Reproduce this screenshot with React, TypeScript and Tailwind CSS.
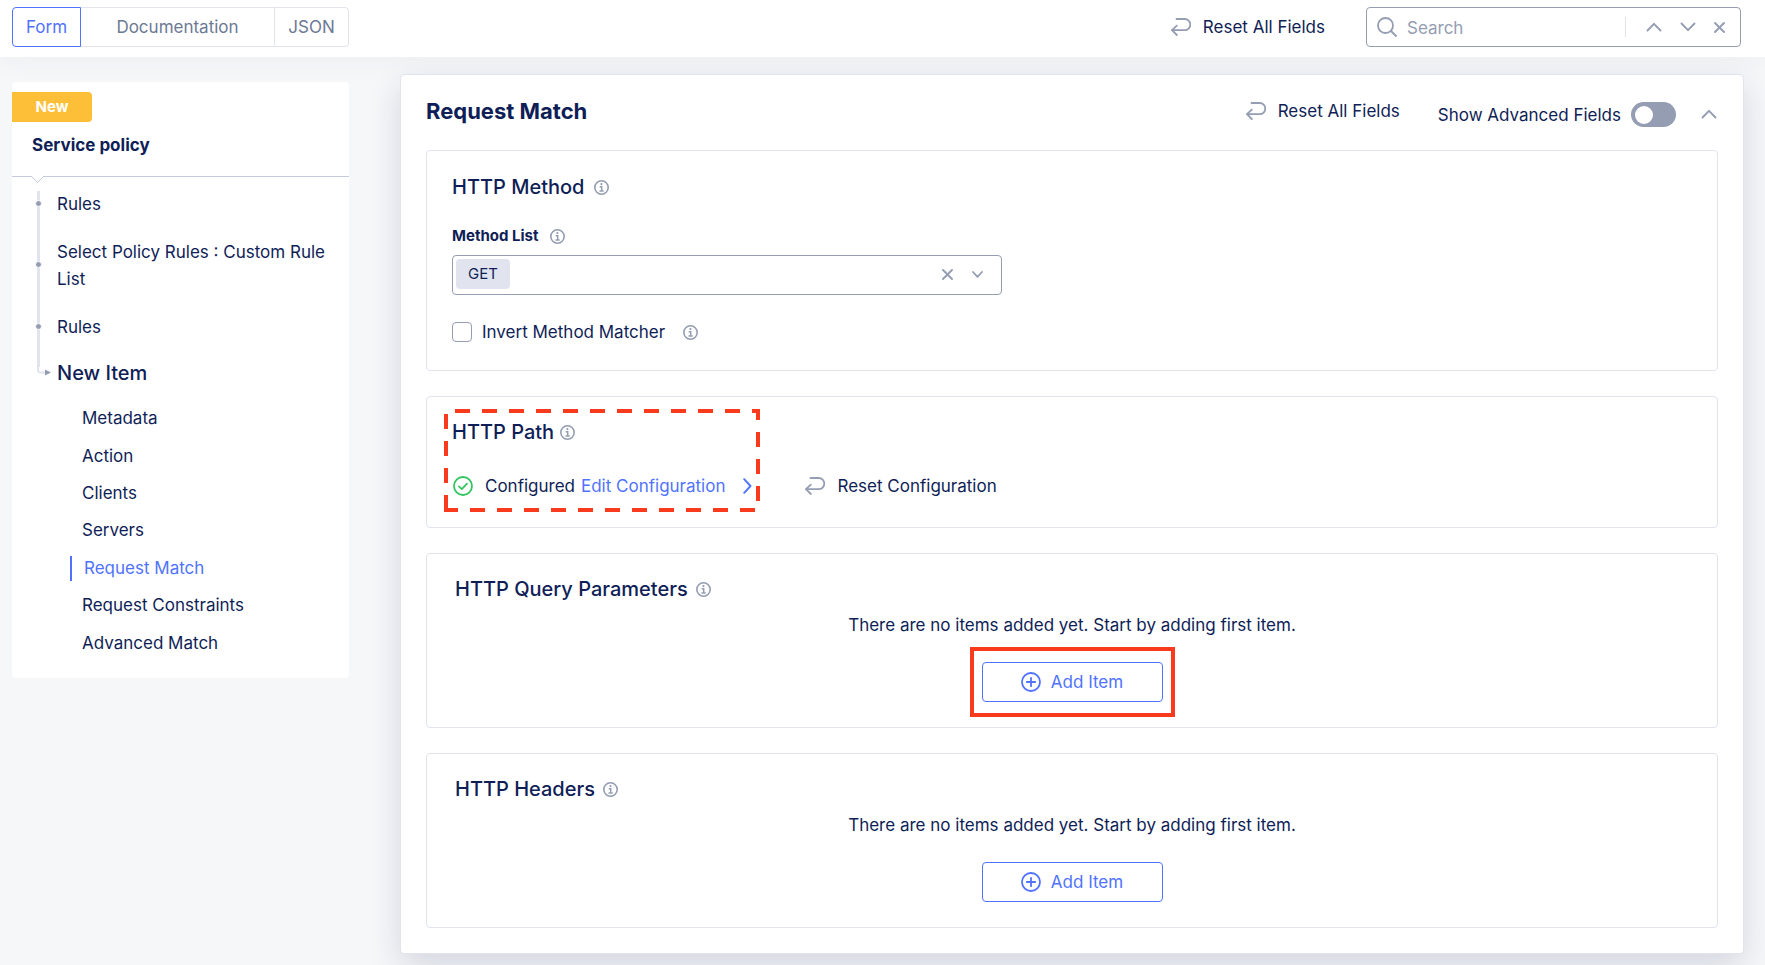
import React, { useState } from "react";

function ResetIcon() {
  return (
    <svg viewBox="0 0 20 18" className="h-[18px] w-5 shrink-0" fill="none" stroke="#949db2" strokeWidth="1.8" strokeLinecap="round" strokeLinejoin="round" aria-hidden="true">
      <path d="M5.500 1h8.200a5.300 5.300 0 0 1 0 11.200H1.200" />
      <path d="M5.800 7.600 1 12.200l4.800 4.800" />
    </svg>
  );
}

function InfoIcon() {
  return (
    <svg viewBox="0 0 15 15" className="size-[15px] shrink-0" fill="none" stroke="#949db2" aria-hidden="true">
      <circle cx="7.500" cy="7.500" r="6.700" strokeWidth="1.600" />
      <circle cx="7.400" cy="4.100" r="1.100" fill="#949db2" stroke="none" />
      <path d="M5.700 6.800h2v4M5.500 11h4.200" strokeWidth="1.500" />
    </svg>
  );
}

function Chevron({ dir, className }: { dir: "up" | "down" | "right"; className: string }) {
  const d = dir === "up" ? "M1.500 8.500 8 1.800l6.500 6.700" : dir === "down" ? "M1.500 1.500 8 8.200l6.500-6.700" : "M1.200 1.200l6.300 6.800-6.300 6.800";
  return (
    <svg viewBox={dir === "right" ? "0 0 9 16" : "0 0 16 10"} className={className} fill="none" stroke="currentColor" strokeWidth="1.900" strokeLinecap="round" strokeLinejoin="round" aria-hidden="true">
      <path d={d} />
    </svg>
  );
}

function Cross() {
  return (
    <svg viewBox="0 0 11 11" className="size-[11px]" fill="none" stroke="currentColor" strokeWidth="1.900" strokeLinecap="round" aria-hidden="true">
      <path d="M1 1l9 9M10 1l-9 9" />
    </svg>
  );
}

function ResetButton({ children }: { children: React.ReactNode }) {
  return (
    <button type="button" className="flex items-center gap-3">
      <ResetIcon />
      <span>{children}</span>
    </button>
  );
}

function AddItem() {
  return (
    <button type="button" className="flex h-10 w-[181px] items-center justify-center gap-[10px] rounded border border-[#4f73ff] bg-white text-[#4f73ff]">
      <svg viewBox="0 0 20 20" className="size-5" fill="none" stroke="currentColor" strokeWidth="1.800" strokeLinecap="round" aria-hidden="true">
        <circle cx="10" cy="10" r="9" />
        <path d="M10 5.800v8.400M5.800 10h8.400" />
      </svg>
      Add Item
    </button>
  );
}

function EmptyList({ title, highlighted }: { title: string; highlighted?: boolean }) {
  return (
    <section className="rounded border border-[#e1e4ef] px-7 pt-[21px] pb-[25px]">
      <h3 className="flex h-7 items-center gap-2 text-[20px] leading-7 font-medium">
        {title} <InfoIcon />
      </h3>
      <div className="flex flex-col items-center">
        <p className="mt-2 mb-[23px] leading-7">There are no items added yet. Start by adding first item.</p>
        <div className="relative">
          <AddItem />
          {highlighted && <div className="pointer-events-none absolute -inset-x-3 -inset-y-[15px] border-4 border-[#f93a1d]" />}
        </div>
      </div>
    </section>
  );
}

const sections = ["Metadata", "Action", "Clients", "Servers", "Request Match", "Request Constraints", "Advanced Match"];

function Step({ children }: { children: React.ReactNode }) {
  return (
    <li className="relative">
      <span className="absolute top-1/2 -left-[22px] size-[7px] -translate-y-[5px] rounded-full border border-white bg-[#949db2]" />
      <a href="#rules">{children}</a>
    </li>
  );
}

function Sidebar() {
  return (
    <aside className="w-[337px] shrink-0 rounded bg-white pb-4">
      <div className="border-b border-[#c5cbdd] pt-[10px] pb-[17px]">
        <span className="flex h-[30px] w-20 items-center justify-center rounded-r bg-[#fdbf38] text-[15px] font-bold text-white">New</span>
        <h2 className="mt-[9px] pl-5 text-[17px] leading-7 font-bold">Service policy</h2>
      </div>
      <svg viewBox="0 0 13 8" className="-mt-px ml-[19px] block h-2 w-[13px]" aria-hidden="true">
        <path d="M.5 0h12L6.500 6.500z" fill="#fff" />
        <path d="M.5.5l6 6 6-6" fill="none" stroke="#c5cbdd" />
      </svg>
      <nav aria-label="Form sections">
        <div className="relative pl-[45px]">
          <svg viewBox="0 0 16 186" className="absolute top-[7px] left-[24px] h-[186px] w-4" fill="none" aria-hidden="true">
            <path d="M2.500 0v176" stroke="#e1e4ef" strokeWidth="3" />
            <path d="M2 174v5q0 2.500 2.500 2.500H9" stroke="#e1e4ef" strokeWidth="2" />
            <path d="M9 178.500v6l6-3z" fill="#949db2" />
          </svg>
          <ul className="flex flex-col gap-[21px] pt-[7px] leading-[27px]">
            <Step>Rules</Step>
            <Step>Select Policy Rules : Custom Rule List</Step>
            <Step>Rules</Step>
          </ul>
          <a href="#new-item" className="mt-[18px] block text-[20px] leading-7 font-medium">New Item</a>
        </div>
        <ul className="mt-[13px] grid h-[262px] auto-rows-fr items-center pl-[58px]">
          {sections.map((s) =>
            s === "Request Match" ? (
              <li key={s}><a href="#request-match" aria-current="true" className="block border-l-2 border-[#4f73ff] pl-3 leading-[25px] text-[#4f73ff]">{s}</a></li>
            ) : (
              <li key={s} className="pl-3"><a href="#section" className="block leading-[25px]">{s}</a></li>
            )
          )}
        </ul>
      </nav>
    </aside>
  );
}

function Toolbar() {
  return (
    <header className="relative z-10 flex h-[57px] items-start justify-between bg-white pt-[7px] pr-6 pl-3 shadow-[0_0_30px_rgba(40,45,70,0.06)]">
      <div className="flex h-10 text-[#6b7994]">
        <button type="button" className="w-[69px] rounded-l border border-[#4f73ff] text-[#4f73ff]">Form</button>
        <button type="button" className="w-[193px] border-y border-[#e1e4ef]">Documentation</button>
        <button type="button" className="w-[75px] rounded-r border border-[#e1e4ef]">JSON</button>
      </div>
      <div className="flex items-start gap-[41px]">
        <div className="flex h-10 items-center"><ResetButton>Reset All Fields</ResetButton></div>
        <div className="flex h-10 w-[375px] items-center rounded border border-[#949db2] pl-[10px] text-[#949db2]">
          <svg viewBox="0 0 20 20" className="size-5 shrink-0" fill="none" stroke="currentColor" strokeWidth="1.800" strokeLinecap="round" aria-hidden="true">
            <circle cx="8.500" cy="8.500" r="7.500" />
            <path d="M14 14l5 5" />
          </svg>
          <input aria-label="Search" placeholder="Search" className="ml-[10px] h-full min-w-0 flex-1 pt-[2px] outline-none placeholder:text-[#949db2]" />
          <div className="flex h-5 items-center gap-[18px] border-l border-[#e1e4ef] pr-[15px] pl-5">
            <button type="button" aria-label="Previous result"><Chevron dir="up" className="h-[10px] w-4" /></button>
            <button type="button" aria-label="Next result"><Chevron dir="down" className="h-[10px] w-4" /></button>
            <button type="button" aria-label="Clear search"><Cross /></button>
          </div>
        </div>
      </div>
    </header>
  );
}

export default function App() {
  const [advanced, setAdvanced] = useState(false);
  const [inverted, setInverted] = useState(false);
  return (
    <div className="min-h-screen bg-[#f6f7f9] font-['Inter','Open_Sans',sans-serif] text-[17px] leading-[26px] text-[#0f1e57]">
      <Toolbar />
      <div className="flex items-start gap-[51px] pr-[21px] pb-[10px] pl-3">
        <div className="pt-[25px]"><Sidebar /></div>
        <main className="mt-[17px] min-w-0 flex-1 rounded border border-[#e1e4ef] bg-white px-[25px] pb-[25px] shadow-[0_12px_32px_rgba(20,35,80,0.15)]">
          <div className="flex h-[75px] justify-between">
            <h1 className="mt-5 text-[22px] leading-8 font-bold">Request Match</h1>
            <div className="flex items-start">
              <div className="mt-[22px] flex h-7 items-center"><ResetButton>Reset All Fields</ResetButton></div>
              <label className="mt-[27px] ml-[38px] flex h-[25px] items-center gap-[10px]">
                Show Advanced Fields
                <input type="checkbox" role="switch" checked={advanced} onChange={(e) => setAdvanced(e.target.checked)} className="peer sr-only" />
                <span className="flex h-[25px] w-[45px] items-center rounded-full bg-[#949db2] px-1 peer-checked:justify-end peer-checked:bg-[#4f73ff]">
                  <span className="size-[18px] rounded-full bg-white" />
                </span>
              </label>
              <button type="button" aria-label="Collapse section" className="mt-[34px] mr-px ml-[25px] flex text-[#949db2]"><Chevron dir="up" className="h-[10px] w-4" /></button>
            </div>
          </div>
          <div className="flex flex-col gap-[25px]">
            <section className="rounded border border-[#e1e4ef] px-[25px] pt-[22px] pb-[27px]">
              <h3 className="flex h-7 items-center gap-[10px] text-[20px] leading-7 font-medium">HTTP Method <InfoIcon /></h3>
              <div className="mt-[23px] flex h-6 items-center gap-3 text-[15px] font-bold">
                <label htmlFor="method">Method List</label> <InfoIcon />
              </div>
              <div className="mt-[7px] flex h-10 w-[550px] max-w-full items-center rounded border border-[#949db2] pr-[18px] pb-[2px] pl-[3px] text-[#949db2]">
                <span className="flex h-[30px] items-center rounded bg-[#e1e4ef] px-3 text-[15px] text-[#0f1e57]">GET</span>
                <input id="method" className="min-w-0 flex-1 outline-none" />
                <button type="button" aria-label="Clear methods"><Cross /></button>
                <button type="button" aria-label="Open methods" className="ml-[19px]">
                  <svg viewBox="0 0 11 7" className="h-[7px] w-[11px]" fill="none" stroke="currentColor" strokeWidth="1.800" strokeLinecap="round" strokeLinejoin="round" aria-hidden="true"><path d="M1 1l4.500 4.800L10 1" /></svg>
                </button>
              </div>
              <div className="mt-[26px] flex h-[22px] items-center">
                <input id="invert" type="checkbox" checked={inverted} onChange={(e) => setInverted(e.target.checked)} className="size-5 appearance-none rounded border border-[#949db2] bg-white checked:bg-[#4f73ff]" />
                <label htmlFor="invert" className="mr-[18px] ml-[10px]">Invert Method Matcher</label>
                <InfoIcon />
              </div>
            </section>

            <section className="relative rounded border border-[#e1e4ef] px-[25px] pt-[21px] pb-[27px]">
              <h3 className="flex h-7 items-center gap-[6px] text-[20px] leading-7 font-medium">HTTP Path <InfoIcon /></h3>
              <div className="mt-[26px] flex h-7 items-center">
                <svg viewBox="0 0 20 20" className="ml-px size-5" fill="none" stroke="#35c464" strokeWidth="1.800" strokeLinecap="round" strokeLinejoin="round" aria-hidden="true">
                  <circle cx="10" cy="10" r="9" />
                  <path d="M6 10.400l2.800 2.700L14 7.600" />
                </svg>
                <span className="ml-3">Configured</span>
                <a href="#edit" className="ml-[6px] flex items-center gap-[18px] text-[#4f73ff]">Edit Configuration <Chevron dir="right" className="h-4 w-[9px]" /></a>
                <div className="ml-[53px]"><ResetButton>Reset Configuration</ResetButton></div>
              </div>
              <svg viewBox="0 0 316 103" className="pointer-events-none absolute top-3 left-[17px] h-[103px] w-[316px]" fill="none" aria-hidden="true">
                <path d="M2 101V2h312v99z" stroke="#f93a1d" strokeWidth="4" strokeDasharray="15 12" />
              </svg>
            </section>

            <EmptyList title="HTTP Query Parameters" highlighted />
            <EmptyList title="HTTP Headers" />
          </div>
        </main>
      </div>
    </div>
  );
}
